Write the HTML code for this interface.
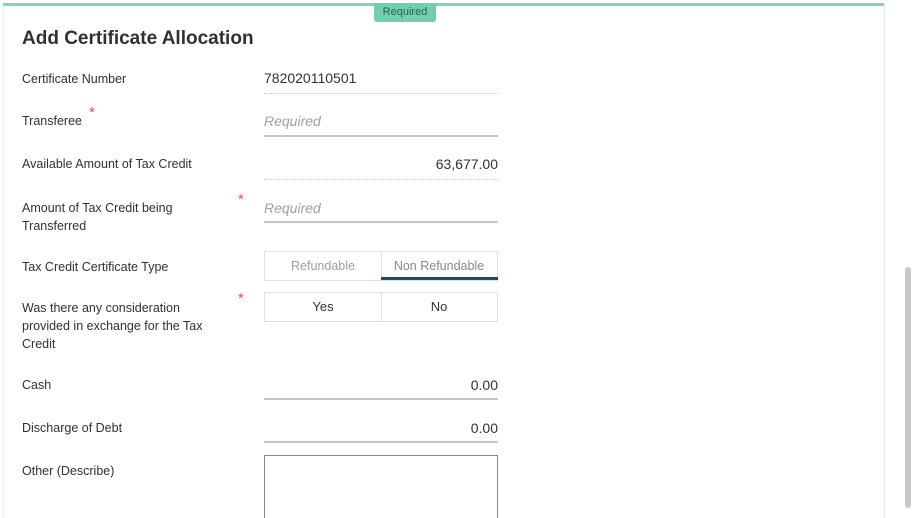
<!DOCTYPE html>
<html><head><style>
html,body{margin:0;width:915px;height:518px;overflow:hidden}
body{background:#fff;position:relative;font-family:"Liberation Sans",sans-serif;color:#323130}
.a{position:absolute}
.lbl{font-size:12.5px;color:#323130;line-height:18px}
.star{color:#e0505a;font-size:15px}
.fld{position:absolute;left:264px;width:234px;font-size:14px}
.ph{color:#a19f9d;font-style:italic}
</style></head><body>
<div class="a" style="left:3px;top:3px;width:881px;height:3px;background:#7fd4bd"></div>
<div class="a" style="left:884px;top:6px;width:1px;height:512px;background:#e6e6e6"></div>
<div class="a" style="left:3px;top:6px;width:1px;height:512px;background:#f0f0f0"></div>
<div class="a" style="left:374px;top:3px;width:62px;height:19px;background:#70cfb2;border-radius:0 0 3px 3px;font-size:11px;color:#2f5f50;text-align:center;line-height:18px">Required</div>
<div class="a" style="left:905px;top:267px;width:6px;height:241px;background:#c8c8c8;border-radius:3px"></div>
<div class="a" style="left:22px;top:28px;font-size:19px;font-weight:bold;color:#323130">Add Certificate Allocation</div>

<div class="a lbl" style="left:22px;top:70px">Certificate Number</div>
<div class="fld" style="top:70px;height:23px;border-bottom:1px dotted #c8c6c4">782020110501</div>

<div class="a lbl" style="left:22px;top:112px">Transferee</div>
<div class="a star" style="left:89px;top:104px">*</div>
<div class="fld ph" style="top:113px;height:22px;border-bottom:2px solid #c8c6c4">Required</div>

<div class="a lbl" style="left:22px;top:155px">Available Amount of Tax Credit</div>
<div class="fld" style="top:156px;height:23px;border-bottom:1px dotted #c8c6c4;text-align:right">63,677.00</div>

<div class="a lbl" style="left:22px;top:199px">Amount of Tax Credit being<br>Transferred</div>
<div class="a star" style="left:238px;top:191px">*</div>
<div class="fld ph" style="top:200px;height:21px;border-bottom:2px solid #c8c6c4">Required</div>

<div class="a lbl" style="left:22px;top:258px">Tax Credit Certificate Type</div>
<div class="a" style="left:264px;top:251px;width:116px;height:28px;border:1px solid #e1dfdd;font-size:12.5px;color:#a19f9d;text-align:center;line-height:28px">Refundable</div>
<div class="a" style="left:381px;top:251px;width:116px;height:28px;border:1px solid #e1dfdd;border-left:none;font-size:12.5px;color:#8a8886;text-align:center;line-height:28px">Non Refundable</div>
<div class="a" style="left:381px;top:277px;width:117px;height:3px;background:#0f4c81"></div>

<div class="a lbl" style="left:22px;top:299px">Was there any consideration<br>provided in exchange for the Tax<br>Credit</div>
<div class="a star" style="left:238px;top:290px">*</div>
<div class="a" style="left:264px;top:292px;width:116px;height:28px;border:1px solid #e1dfdd;font-size:13px;text-align:center;line-height:28px">Yes</div>
<div class="a" style="left:381px;top:292px;width:116px;height:28px;border:1px solid #e1dfdd;border-left:none;font-size:13px;text-align:center;line-height:28px">No</div>

<div class="a lbl" style="left:22px;top:376px">Cash</div>
<div class="fld" style="top:377px;height:21px;border-bottom:2px solid #c8c6c4;text-align:right">0.00</div>

<div class="a lbl" style="left:22px;top:419px">Discharge of Debt</div>
<div class="fld" style="top:420px;height:21px;border-bottom:2px solid #c8c6c4;text-align:right">0.00</div>

<div class="a lbl" style="left:22px;top:462px">Other (Describe)</div>
<div class="a" style="left:264px;top:455px;width:232px;height:62px;border:1px solid #8a8886;border-bottom:none"></div>
</body></html>
